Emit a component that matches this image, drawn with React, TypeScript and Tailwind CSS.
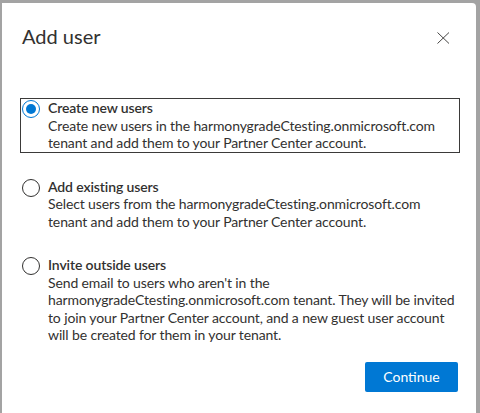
import React from "react";

const font = { fontFamily: 'Lato, "Noto Sans", sans-serif' };

function Radio({ checked }: { checked: boolean }) {
  return (
    <div
      className={
        "mt-[1px] flex h-[18px] w-[18px] shrink-0 items-center justify-center rounded-full border " +
        (checked ? "border-[#0078d4]" : "border-[#323130]")
      }
    >
      {checked && <div className="h-[10px] w-[10px] rounded-full bg-[#0078d4]" />}
    </div>
  );
}

function Option({
  checked,
  title,
  lines,
  boxed,
}: {
  checked: boolean;
  title: string;
  lines: string[];
  boxed?: boolean;
}) {
  return (
    <div
      className={
        "flex gap-[8px] pl-[1px] border " +
        (boxed ? "border-[#3b3a39]" : "border-transparent")
      }
    >
      <Radio checked={checked} />
      <div className="flex flex-col whitespace-nowrap text-[14px] leading-[17.5px] tracking-[-0.12px] text-[#323130]">
        <div className="font-semibold">{title}</div>
        {lines.map((l, i) => (
          <div key={i}>{l}</div>
        ))}
      </div>
    </div>
  );
}

export default function App() {
  return (
    <div className="h-[413px] w-[480px] overflow-hidden bg-[#a3a3a3] pl-[2px] pt-[3px]" style={font}>
      <div className="relative flex h-[410px] w-[474px] flex-col rounded-tr-[4px] bg-white">
        <div className="flex items-start justify-between pl-[20px] pr-[26px] pt-[19px]">
          <h1 className="text-[20px] leading-[28px] font-normal text-[#323130]">Add user</h1>
          <svg width="13" height="12" viewBox="0 0 13 12" className="mt-[10px]">
            <path d="M0.5 0.5 L12 11.5 M12 0.5 L0.5 11.5" stroke="#323130" strokeWidth="0.9" />
          </svg>
        </div>
        <div className="mt-[48px] flex flex-col gap-[24px] pl-[18px] pr-[16px]">
          <Option
            checked
            boxed
            title="Create new users"
            lines={[
              "Create new users in the harmonygradeCtesting.onmicrosoft.com",
              "tenant and add them to your Partner Center account.",
            ]}
          />
          <Option
            checked={false}
            title="Add existing users"
            lines={[
              "Select users from the harmonygradeCtesting.onmicrosoft.com",
              "tenant and add them to your Partner Center account.",
            ]}
          />
          <Option
            checked={false}
            title="Invite outside users"
            lines={[
              "Send email to users who aren't in the",
              "harmonygradeCtesting.onmicrosoft.com tenant. They will be invited",
              "to join your Partner Center account, and a new guest user account",
              "will be created for them in your tenant.",
            ]}
          />
        </div>
        <div className="flex justify-end pr-[18px] pt-[17px]">
          <button className="h-[30px] w-[93px] rounded-[2px] bg-[#0078d4] text-[14px] font-normal text-white">
            Continue
          </button>
        </div>
      </div>
    </div>
  );
}
